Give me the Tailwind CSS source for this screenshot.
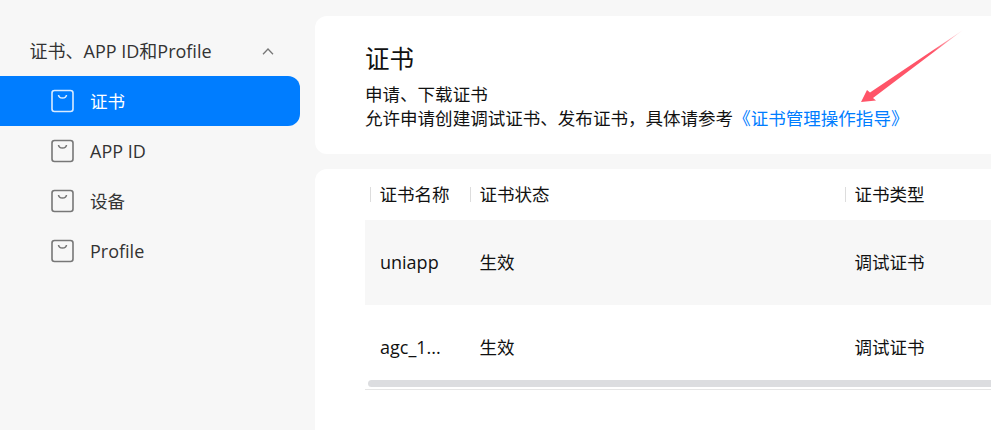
<!DOCTYPE html>
<html lang="zh-CN">
<head>
  <meta charset="UTF-8">
  <title>证书</title>
  <script src="https://cdn.jsdelivr.net/npm/@tailwindcss/browser@4"></script>
</head>
<body class="bg-[#f7f7f7] text-[#111] text-[17.55px] font-['Open_Sans','Noto_Sans_CJK_SC',sans-serif] overflow-hidden">
  <div class="relative flex w-[991px] h-[430px] overflow-hidden">

    <!-- sidebar -->
    <aside class="w-[315px] shrink-0 pt-[26px] pr-[15px]">
      <div class="flex items-center justify-between h-[50px] pl-[29.5px] pr-[26px] text-[#333] text-[18px]">
        <span>证书、APP ID和Profile</span>
        <svg class="w-[12px] h-[7px]" viewBox="0 0 12 7" fill="none" stroke="#777" stroke-width="1.3"><path d="M1 6.2 6 1l5 5.2"/></svg>
      </div>
      <a class="flex items-center h-[50px] pl-[51px] gap-[16px] bg-[#007dff] text-white rounded-r-[12px]">
        <svg class="w-[23px] h-[24px]" viewBox="0 0 23 24" fill="none" stroke="#fff" stroke-width="1.6" opacity=".85"><rect x="1" y="1.5" width="21" height="21" rx="2.5"/><path d="M7.5 6c.5 4 7.500 4 8 0"/></svg>
        <span>证书</span>
      </a>
      <a class="flex items-center h-[50px] pl-[51px] gap-[16px] text-[#333]">
        <svg class="w-[23px] h-[24px]" viewBox="0 0 23 24" fill="none" stroke="#777" stroke-width="1.6"><rect x="1" y="1.5" width="21" height="21" rx="2.5"/><path d="M7.500 6c.5 4 7.500 4 8 0"/></svg>
        <span class="text-[18px]">APP ID</span>
      </a>
      <a class="flex items-center h-[50px] pl-[51px] gap-[16px] text-[#333]">
        <svg class="w-[23px] h-[24px]" viewBox="0 0 23 24" fill="none" stroke="#777" stroke-width="1.6"><rect x="1" y="1.5" width="21" height="21" rx="2.5"/><path d="M7.500 6c.5 4 7.500 4 8 0"/></svg>
        <span>设备</span>
      </a>
      <a class="flex items-center h-[50px] pl-[51px] gap-[16px] text-[#333]">
        <svg class="w-[23px] h-[24px]" viewBox="0 0 23 24" fill="none" stroke="#777" stroke-width="1.6"><rect x="1" y="1.5" width="21" height="21" rx="2.5"/><path d="M7.500 6c.5 4 7.500 4 8 0"/></svg>
        <span class="text-[18px]">Profile</span>
      </a>
    </aside>

    <main class="flex-1 pt-[16px] flex flex-col gap-[15px]">
      <!-- head card -->
      <section class="h-[138px] bg-white rounded-l-[12px] pl-[50px] pt-[25px] leading-[22px]">
        <h1 class="text-[24.5px] leading-[36px] mb-[6px]">证书</h1>
        <p>申请、下载证书</p>
        <p class="mt-[2px]">允许申请创建调试证书、发布证书，具体请参考<a class="text-[#007dff]">《证书管理操作指导》</a></p>
      </section>

      <!-- table card -->
      <section class="flex-1 bg-white rounded-tl-[12px] pl-[50px]">
        <div class="grid grid-cols-[105px_375px_1fr] h-[51px] items-center">
          <div class="flex items-center pl-[5px]"><i class="w-px h-[15px] bg-[#ddd] mr-[8.5px]"></i>证书名称</div>
          <div class="flex items-center"><i class="w-px h-[15px] bg-[#ddd] mr-[8.5px]"></i>证书状态</div>
          <div class="flex items-center"><i class="w-px h-[15px] bg-[#ddd] mr-[8.5px]"></i>证书类型</div>
        </div>
        <div class="grid grid-cols-[105px_375px_1fr] h-[85px] items-center bg-[#f7f7f7]">
          <div class="pl-[15px] text-[18px]">uniapp</div>
          <div class="pl-[9.5px]">生效</div>
          <div class="pl-[9.5px]">调试证书</div>
        </div>
        <div class="grid grid-cols-[105px_375px_1fr] h-[85px] items-center">
          <div class="pl-[15px] text-[18px]">agc_1...</div>
          <div class="pl-[9.5px]">生效</div>
          <div class="pl-[9.5px]">调试证书</div>
        </div>
        <div class="relative -mt-[10px] h-[10px] border-b border-[#e5e5e5]">
          <div class="ml-[3px] h-[7px] bg-[#dcdde0] rounded-l-full"></div>
        </div>
      </section>
    </main>

    <!-- annotation arrow -->
    <svg class="absolute left-[855px] top-[25px] w-[112px] h-[80px]" viewBox="0 0 112 80">
      <defs>
        <linearGradient id="arrowFade" x1="0" y1="1" x2="1" y2="0">
          <stop offset="0" stop-color="#ff5468"/>
          <stop offset="0.7" stop-color="#ff5468"/>
          <stop offset="1" stop-color="#ff5468" stop-opacity=".15"/>
        </linearGradient>
      </defs>
      <path d="M108 5 18 73 21 75.500 6 77 12 65 15 67.500Z" fill="url(#arrowFade)"/>
    </svg>
  </div>
</body>
</html>
